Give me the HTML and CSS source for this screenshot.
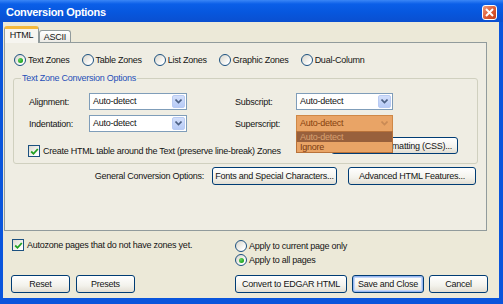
FILE: index.html
```html
<!DOCTYPE html>
<html lang="en">
<head>
  <meta charset="UTF-8" />
  <title>Conversion Options</title>
  <link rel="stylesheet" href="styles.css">
</head>
<body>
  <div class="window">
    <div class="titlebar">
      <span class="title">Conversion Options</span>
      <span class="close">
        <svg width="9" height="9" viewBox="0 0 9 9"><path d="M1 1 L8 8 M8 1 L1 8" stroke="#fff" stroke-width="2" /></svg>
      </span>
    </div>

    <div class="client">
      <div class="tabs">
        <div class="tab active">HTML</div>
        <div class="tab">ASCII</div>
      </div>

      <div class="panel">
        <div class="zones">
          <label class="opt"><span class="radio checked"></span>Text Zones</label>
          <label class="opt"><span class="radio"></span>Table Zones</label>
          <label class="opt"><span class="radio"></span>List Zones</label>
          <label class="opt"><span class="radio"></span>Graphic Zones</label>
          <label class="opt"><span class="radio"></span>Dual-Column</label>
        </div>

        <fieldset class="group">
          <legend>Text Zone Conversion Options</legend>
          <div class="fields">
            <span class="lbl">Alignment:</span>
            <div class="combo"><span class="val">Auto-detect</span><span class="arrow"><svg width="7" height="5" viewBox="0 0 7 5"><path d="M0.5 0.5 L3.5 3.5 L6.5 0.5" fill="none" stroke="#4d6185" stroke-width="1.6" /></svg></span></div>
            <span class="lbl">Subscript:</span>
            <div class="combo narrow"><span class="val">Auto-detect</span><span class="arrow"><svg width="7" height="5" viewBox="0 0 7 5"><path d="M0.5 0.5 L3.5 3.5 L6.5 0.5" fill="none" stroke="#4d6185" stroke-width="1.6" /></svg></span></div>

            <span class="lbl">Indentation:</span>
            <div class="combo"><span class="val">Auto-detect</span><span class="arrow"><svg width="7" height="5" viewBox="0 0 7 5"><path d="M0.5 0.5 L3.5 3.5 L6.5 0.5" fill="none" stroke="#4d6185" stroke-width="1.6" /></svg></span></div>
            <span class="lbl">Superscript:</span>
            <div class="combo narrow open">
              <span class="val">Auto-detect</span><span class="arrow"><svg width="7" height="5" viewBox="0 0 7 5"><path d="M0.5 0.5 L3.5 3.5 L6.5 0.5" fill="none" stroke="#c98a55" stroke-width="1.6" /></svg></span>
              <ul class="droplist">
                <li class="hot">Auto-detect</li>
                <li>Ignore</li>
              </ul>
            </div>
          </div>
          <div class="check-row">
            <label class="opt"><span class="check checked"><svg width="9" height="9" viewBox="0 0 9 9"><path d="M1.2 4.5 L3.5 6.8 L7.8 2" fill="none" stroke="#21a121" stroke-width="1.8" /></svg></span>Create HTML table around the Text (preserve line-break) Zones</label>
            <button class="btn css-btn">Paragraph Formatting (CSS)...</button>
          </div>
        </fieldset>

        <div class="general">
          <span>General Conversion Options:</span>
          <button class="btn fonts-btn">Fonts and Special Characters...</button>
          <button class="btn adv-btn">Advanced HTML Features...</button>
        </div>
      </div>

      <div class="apply">
        <label class="opt autozone"><span class="check checked"><svg width="9" height="9" viewBox="0 0 9 9"><path d="M1.2 4.5 L3.5 6.8 L7.8 2" fill="none" stroke="#21a121" stroke-width="1.8" /></svg></span>Autozone pages that do not have zones yet.</label>
        <div class="scope">
          <label class="opt"><span class="radio"></span>Apply to current page only</label>
          <label class="opt"><span class="radio checked"></span>Apply to all pages</label>
        </div>
      </div>

      <div class="actions">
        <button class="btn small">Reset</button>
        <button class="btn small">Presets</button>
        <button class="btn convert">Convert to EDGAR HTML</button>
        <button class="btn save focused">Save and Close</button>
        <button class="btn small">Cancel</button>
      </div>
    </div>
  </div>
</body>
</html>
```

FILE: styles.css
```css
:root {
  --face: #ece9d8;
  --panel: #efede3;
  --xp-blue: #0a55dc;
  --ctl-border: #1c5180;
  --btn-border: #003c74;
  --combo-border: #7f9db9;
  --legend: #1f4fb8;
  --text: #141414;
}

* {
  box-sizing: border-box;
}
html, body {
  margin: 0;
}
body {
  width: 503px;
  height: 304px;
  overflow: hidden;
  font-family: "Liberation Sans", Arial, sans-serif;
  font-size: 9px;
  letter-spacing: -0.25px;
  color: var(--text);
}

.window {
  width: 503px;
  height: 304px;
  background: var(--xp-blue);
  display: flex;
  flex-direction: column;
}

/* title bar */
.titlebar {
  height: 22px;
  flex: none;
  display: flex;
  align-items: center;
  justify-content: space-between;
  padding: 0 6px;
  background: linear-gradient(#3a86f6, #0b5fe8 4px, #0757de 55%, #0a4fd0);
  color: #fff;
}
.title {
  font-weight: bold;
  font-size: 11px;
  letter-spacing: -0.3px;
  margin-top: 1px;
}
.close {
  width: 15px;
  height: 15px;
  border: 1px solid #fff;
  border-radius: 3px;
  background: linear-gradient(135deg, #ee9b7c, #dc5a33 55%, #c3401a);
  display: flex;
  align-items: center;
  justify-content: center;
  margin-top: 2px;
}

.client {
  flex: 1;
  margin: 0 4px 6px 3px;
  background: var(--face);
  display: flex;
  flex-direction: column;
}

/* tabs */
.tabs {
  display: flex;
  align-items: flex-start;
  padding: 4px 0 0 1px;
  position: relative;
  z-index: 1;
}
.tab {
  width: 32px;
  height: 12px;
  margin-top: 4px;
  line-height: 12px;
  text-align: center;
  border: 1px solid #919b9c;
  border-bottom: none;
  border-radius: 3px 3px 0 0;
  background: linear-gradient(#fff, #ecebe6);
}
.tab.active {
  width: 35px;
  height: 17px;
  margin-top: 0;
  margin-bottom: -1px;
  border-top: 3px solid #f4b83c;
  background: #f6f5f0;
  line-height: 11px;
  padding-top: 1px;
}

.panel {
  height: 189px;
  margin-left: 1px;
  width: 483px;
  border: 1px solid #919b9c;
  background: var(--panel);
  display: flex;
  flex-direction: column;
}

/* shared controls */
.opt {
  display: flex;
  align-items: center;
  gap: 2px;
  line-height: 12px;
  white-space: nowrap;
}
.radio {
  width: 12px;
  height: 12px;
  border: 1px solid var(--ctl-border);
  border-radius: 50%;
  background: linear-gradient(135deg, #d8d5ca, #fff 80%);
  display: flex;
  align-items: center;
  justify-content: center;
  flex: none;
}
.radio.checked::after {
  content: "";
  width: 5px;
  height: 5px;
  border-radius: 50%;
  background: radial-gradient(circle at 35% 35%, #5fd65f, #21a121 70%);
}
.check {
  width: 12px;
  height: 12px;
  border: 1px solid var(--ctl-border);
  background: linear-gradient(135deg, #dcd9cf, #fff 85%);
  display: flex;
  align-items: center;
  justify-content: center;
  flex: none;
  margin-right: 1px;
}

.btn {
  font: inherit;
  letter-spacing: inherit;
  color: var(--text);
  height: 18px;
  padding: 0;
  border: 1px solid var(--btn-border);
  border-radius: 3px;
  background: linear-gradient(#fff, #f3f2ec 60%, #e2ded3);
  white-space: nowrap;
  overflow: hidden;
}
.btn.focused {
  box-shadow: inset 0 0 0 1px #97b7f0, inset 0 0 0 2px #c4d6f7;
}

/* zone type row */
.zones {
  display: flex;
  gap: 12px;
  margin: 11px 0 0 9px;
}

/* group box */
.group {
  margin: 6px 0 0 8px;
  width: 465px;
  padding: 0 0 6px 7px;
  border: 1px solid #d0d0bf;
  border-radius: 3px;
}
.group legend {
  color: var(--legend);
  padding: 0 1px;
  line-height: 12px;
}
.fields {
  display: grid;
  grid-template-columns: 60px 146px 61px 97px;
  grid-auto-rows: 17px;
  row-gap: 5px;
  align-items: center;
  margin: 9px 0 0 8px;
}
.combo {
  width: 98px;
  height: 17px;
  border: 1px solid var(--combo-border);
  background: #fff;
  display: flex;
  align-items: stretch;
  padding: 1px 1px 1px 3px;
  position: relative;
}
.combo.narrow {
  width: 97px;
}
.combo .val {
  flex: 1;
  line-height: 13px;
}
.combo .arrow {
  width: 13px;
  border: 1px solid #b9cbf3;
  border-radius: 2px;
  background: linear-gradient(#d3dffb, #b7cbf6);
  display: flex;
  align-items: center;
  justify-content: center;
}

.combo.open {
  background: #e9a466;
  border-color: #cf8846;
  color: #86420f;
}
.combo.open .arrow {
  background: #e9a466;
  border-color: #e9a466;
}
.droplist {
  position: absolute;
  top: 100%;
  left: -1px;
  right: -1px;
  margin: 0;
  padding: 0;
  list-style: none;
  border: 1px solid #b8723a;
  background: #e9a466;
  z-index: 2;
}
.droplist li {
  height: 10px;
  line-height: 10px;
  padding-left: 3px;
  color: #7a3a10;
}
.droplist li.hot {
  background: #98603c;
  color: #d9a170;
}

.check-row {
  display: flex;
  align-items: flex-start;
  margin: 5px 19px 0 7px;
}
.check-row .opt {
  margin-top: 8px;
}
.css-btn {
  margin-left: auto;
  width: 127px;
  height: 17px;
}

/* general options */
.general {
  display: flex;
  align-items: center;
  justify-content: flex-end;
  margin: 3px 10px 0 0;
}
.general span {
  margin-right: 8px;
}
.fonts-btn {
  width: 125px;
  margin-right: 11px;
}
.adv-btn {
  width: 128px;
}

/* apply scope */
.apply {
  display: flex;
  align-items: flex-start;
  margin: 8px 0 0 9px;
}
.autozone {
  width: 223px;
}
.scope {
  display: flex;
  flex-direction: column;
  gap: 2px;
  margin-top: 1px;
}

/* bottom buttons */
.actions {
  display: flex;
  gap: 5px;
  margin: 9px 11px 0 8px;
}
.btn.small {
  width: 59px;
}
.btn.small:nth-child(2) {
  margin-left: 1px;
}
.convert {
  width: 112px;
  margin-left: auto;
}
.save {
  width: 72px;
}
```
